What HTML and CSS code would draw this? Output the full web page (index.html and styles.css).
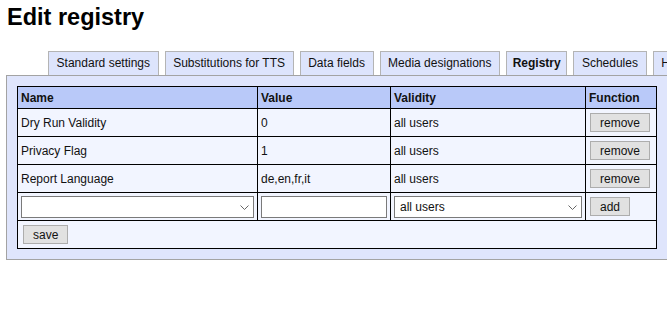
FILE: index.html
```html
<!DOCTYPE html>
<html lang="en">
<head>
<meta charset="utf-8">
<title>Edit registry</title>
<link rel="stylesheet" href="styles.css">
</head>
<body>
<div class="page">
  <h1 class="title">Edit registry</h1>
  <ul class="tabs">
    <li class="tab">Standard settings</li>
    <li class="tab">Substitutions for TTS</li>
    <li class="tab">Data fields</li>
    <li class="tab">Media designations</li>
    <li class="tab tab-active">Registry</li>
    <li class="tab">Schedules</li>
    <li class="tab">History</li>
  </ul>
  <div class="panel">
    <table class="grid">
      <colgroup>
        <col class="c-name">
        <col class="c-value">
        <col class="c-validity">
        <col class="c-func">
      </colgroup>
      <thead>
        <tr><th>Name</th><th>Value</th><th>Validity</th><th>Function</th></tr>
      </thead>
      <tbody>
        <tr><td>Dry Run Validity</td><td>0</td><td>all users</td><td><button class="btn">remove</button></td></tr>
        <tr><td>Privacy Flag</td><td>1</td><td>all users</td><td><button class="btn">remove</button></td></tr>
        <tr><td>Report Language</td><td>de,en,fr,it</td><td>all users</td><td><button class="btn">remove</button></td></tr>
        <tr class="row-new">
          <td><select class="field select"><option></option></select></td>
          <td><input class="field text" type="text"></td>
          <td><select class="field select"><option>all users</option></select></td>
          <td><button class="btn">add</button></td>
        </tr>
        <tr class="row-save"><td colspan="4"><button class="btn">save</button></td></tr>
      </tbody>
    </table>
  </div>
</div>
</body>
</html>
```
FILE: styles.css
```css
html, body {
  margin: 0;
  padding: 0;
  overflow: hidden;
  background: #ffffff;
}
body {
  width: 667px;
  font-family: "Liberation Sans", Arial, sans-serif;
  font-size: 12px;
  color: #111;
}
.page {
  padding-left: 6px;
}
.title {
  font-size: 23.5px;
  font-weight: bold;
  line-height: 26px;
  margin: 4px 0 0 1px;
  color: #000;
}
.tabs {
  display: flex;
  flex-wrap: nowrap;
  gap: 6px;
  list-style: none;
  margin: 21px 0 0;
  padding: 0 0 0 42px;
  height: 24px;
  white-space: nowrap;
}
.tab {
  flex-shrink: 0;
  background: #dde4fc;
  border: 1px solid #b4b4b4;
  border-bottom: 0;
  padding: 0 7.6px;
  line-height: 23px;
  color: #111;
}
.tab-active {
  font-weight: bold;
  padding: 0 5.6px;
}
.panel {
  width: 640px;
  padding: 10px;
  border: 1px solid #a3a3a3;
  background: #dfe5fc;
}
.grid {
  width: 639px;
  table-layout: fixed;
  border-collapse: collapse;
  border: 1px solid #000;
}
.c-name { width: 240px; }
.c-value { width: 133px; }
.c-validity { width: 195px; }
.c-func { width: 71px; }
.grid th,
.grid td {
  border: 1px solid #000;
  padding: 0 3px;
  text-align: left;
  vertical-align: middle;
  white-space: nowrap;
}
.grid th {
  background: #b9c9f9;
  font-weight: bold;
  height: 21px;
  color: #111;
}
.grid td {
  background: #f2f5ff;
  height: 27px;
}
.row-save td {
  padding: 0 4px;
}
.btn {
  height: 19px;
  padding: 0 9px;
  border: 1px solid #adadad;
  border-radius: 0;
  background: #e1e1e1;
  font-family: "Liberation Sans", Arial, sans-serif;
  font-size: 12px;
  color: #111;
  margin: 0 0 0 1px;
  vertical-align: middle;
}
.field {
  display: block;
  box-sizing: border-box;
  width: 100%;
  height: 22px;
  margin: 1px 0 0;
  border: 1px solid #7a7a7a;
  border-radius: 0;
  background-color: #fff;
  font-family: "Liberation Sans", Arial, sans-serif;
  font-size: 12px;
  color: #111;
}
.select {
  appearance: none;
  -webkit-appearance: none;
  padding: 0 20px 0 5px;
  background-image: url("data:image/svg+xml;utf8,<svg xmlns='http://www.w3.org/2000/svg' width='9' height='5' viewBox='0 0 9 5'><path d='M0.5 0.5 L4.5 4.5 L8.5 0.5' fill='none' stroke='%23666' stroke-width='1'/></svg>");
  background-repeat: no-repeat;
  background-position: right 4px center;
}
.text {
  padding: 0 3px;
}
```
